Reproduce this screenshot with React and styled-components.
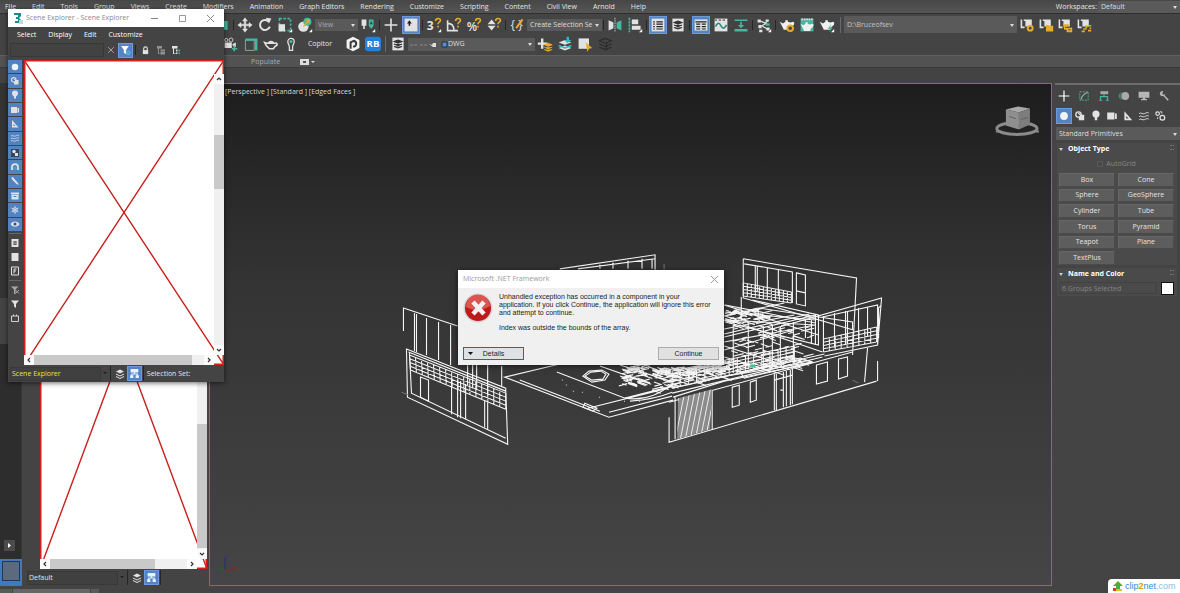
import { useState } from "react"
import styled, { createGlobalStyle, css } from "styled-components"

const GlobalStyle = createGlobalStyle`
  * { box-sizing: border-box; }
  body {
    margin: 0;
    background: #444;
    color: #e4e4e4;
    font: 7px/10px "Open Sans", "Noto Sans", sans-serif;
    overflow: hidden;
  }
  button, input, select {
    font: inherit;
    color: inherit;
    margin: 0;
    padding: 0;
    border: 0;
    border-radius: 0;
    background: none;
  }
  ul { list-style: none; margin: 0; padding: 0; }
  h1, h2, p { margin: 0; font: inherit; }
  a { color: inherit; text-decoration: none; }
`

/* ---------- icons, all on a 20 x 20 grid ---------- */

const W = "#e2e2e2"
const T = "#45b8a0"
const Y = "#e8ab2e"

const teapot = (
  <path d="M1 6l4 2 3-2V4h3v2l3 1 4-1c2 1 1 5-2 6l-2 4H6l-2-4z" fill="#f0f0f0" />
)
const question = (color = Y) => (
  <path d="M12 5c0-4 6-4 6-1 0 3-3 2-3 5m0 2v2" fill="none" stroke={color} strokeWidth="2" />
)
const corner = <path d="M19 15v4h-4z" fill="#fff" />
const renderFrame = <path d="M2 3h2v9h3v2H2zM6 3h10v9H8V5H6z" fill={W} />

const icons = {
  select: <path d="M3 5h14v11H3z" fill={T} />,
  move: <path d="M10 1l3 4h-2v4h4V7l4 3-4 3v-2h-4v4h2l-3 4-3-4h2v-4H5v2l-4-3 4-3v2h4V5H7z" fill={W} stroke={W} strokeWidth="0.600" />,
  rotate: (
    <>
      <path d="M15 6a6.300 6.300 0 1 0 1 6" fill="none" stroke={W} strokeWidth="2.500" />
      <path d="M11 1l7 1-3 6z" fill={W} />
    </>
  ),
  scale: (
    <>
      <path d="M3 2h14v15H3z" fill="none" stroke={T} strokeWidth="2" strokeDasharray="3 2" />
      <path d="M2 9h8v9H2z" fill={W} />
      {corner}
    </>
  ),
  place: (
    <>
      <circle cx="8" cy="12" r="6.500" fill={W} />
      <circle cx="13" cy="6" r="5" fill={T} />
      <path d="M8 12l7-8m-4 0h4v4" stroke={Y} strokeWidth="1.500" fill="none" />
      {corner}
    </>
  ),
  pivot: (
    <>
      <path d="M2 3h6v8H6v4H4v-4H2z" fill={W} />
      <path d="M11 3h6v8l-3 4-3-4z" fill={T} />
      <path d="M14 5l2 4h-4z" fill="#444" />
      {corner}
    </>
  ),
  axis: <path d="M9 2h2v7h7v2h-7v7H9v-7H2V9h7z" fill={W} />,
  keyboard: (
    <>
      <path d="M2 2h16v16H2z" fill={W} />
      <path d="M7 11V8H5l3-4 3 4H9v3z" fill="#222" />
    </>
  ),
  snap: (
    <>
      <text x="1" y="16" fontSize="15" fontWeight="700" fill={W}>3</text>
      {question()}
      {corner}
    </>
  ),
  angle: (
    <>
      <path d="M2 4v13h13M2 8c6 0 8 4 8 9" fill="none" stroke={W} strokeWidth="2" />
      {question()}
    </>
  ),
  percent: (
    <>
      <text x="1" y="17" fontSize="15" fontWeight="600" fill={W}>%</text>
      {question()}
    </>
  ),
  spinner: (
    <>
      <path d="M7 3l5 6H2zM7 17l5-6H2z" fill={W} />
      {question()}
    </>
  ),
  braces: (
    <>
      <text x="2" y="15" fontSize="15" fill={W}>{"{ }"}</text>
      <path d="M9 14l8-11" stroke={Y} strokeWidth="2.500" />
    </>
  ),
  mirror: (
    <>
      <path d="M2 4l6 3v7l-6 3z" fill={W} />
      <path d="M10 1v18" stroke={W} strokeDasharray="2 1" />
      <path d="M18 4l-6 3v7l6 3z" fill={T} />
    </>
  ),
  align: (
    <>
      <path d="M3 1v18" stroke={T} strokeWidth="2" strokeDasharray="3 1" />
      <path d="M6 3h8v6H6zM6 11h11v5H6z" fill={W} />
      {corner}
    </>
  ),
  list: (
    <>
      <path d="M2 2h16v16H2z" fill={W} />
      <path d="M4 6h2m2 0h8M4 9h2m2 0h8M4 12h2m2 0h8M4 15h2m2 0h8" stroke="#222" strokeWidth="1.500" />
    </>
  ),
  layerBox: (
    <>
      <path d="M3 2h14v16H3z" fill={W} />
      <path d="M10 5l5 2-5 2-5-2zM5 10l5 2 5-2M5 13l5 2 5-2" fill="#333" stroke="#333" strokeWidth="1.300" />
    </>
  ),
  table: (
    <>
      <path d="M2 3h16v14H2z" fill={W} />
      <path d="M3 6h14M4 9h5m2 0h5M4 12h5m2 0h5M4 15h5m2 0h5" stroke="#222" strokeWidth="1.500" />
    </>
  ),
  curve: (
    <>
      <path d="M2 2h16v16H2z" fill={W} />
      <path d="M2 4h15" stroke="#555" strokeDasharray="3 2" strokeWidth="1.500" />
      <path d="M3 12c3-6 5-5 7-1s4 4 7-1" fill="none" stroke="#278c7a" strokeWidth="2" />
    </>
  ),
  ribbon: (
    <>
      <path d="M2 3h16v2H2zM2 15h16v3H2z" fill={T} />
      <path d="M9 6h2v4h3l-4 4-4-4h3z" fill={T} />
    </>
  ),
  schematic: (
    <>
      <path d="M5 5l8 3-6 3 7 4m0-10l-3 4" fill="none" stroke={W} strokeWidth="1.500" />
      <path d="M2 3h4v4H2zM12 3h4v3h-4zM3 10h4v4H3zM4 16h4v3H4zM13 13h4v4h-4z" fill={W} />
      <path d="M12 8h5v3h-5z" fill={T} />
      {corner}
    </>
  ),
  renderSetup: (
    <>
      {teapot}
      <circle cx="14" cy="14" r="3.500" fill="#444" stroke={Y} strokeWidth="2.500" />
    </>
  ),
  renderWindow: (
    <>
      <path d="M2 2h16v16H2z" fill={T} />
      <path d="M3 3h14" stroke={W} strokeDasharray="2 1" strokeWidth="2" />
      <g transform="translate(1 3) scale(.9)">{teapot}</g>
    </>
  ),
  render: (
    <>
      {teapot}
      <path d="M15 9l-4 6h3l-1 4 4-6h-3z" fill={T} />
      {corner}
    </>
  ),
  outGear: (
    <>
      {renderFrame}
      <circle cx="14" cy="14" r="3" fill="none" stroke={Y} strokeWidth="2.500" />
    </>
  ),
  outFolder: (
    <>
      {renderFrame}
      <path d="M10 10h3l1 1h5v7h-9z" fill={Y} />
    </>
  ),
  outImport: (
    <>
      {renderFrame}
      <path d="M8 9h7v2h-2v2h6v6h-7v-3H9z" fill={Y} />
      <path d="M10 13h7M14 16h3" stroke="#444" />
    </>
  ),
  outLink: (
    <>
      {renderFrame}
      <path d="M7 18h3v-3h3v-4h5v4m-3 2h4" stroke={Y} strokeWidth="2" fill="none" strokeDasharray="4 1" />
    </>
  ),
  camera: (
    <>
      <path d="M2 8h9v7H2zM12 10l4-2v6l-4-2z" fill={W} />
      <circle cx="4" cy="5" r="2" fill="none" stroke={W} />
      <circle cx="10" cy="5" r="2.500" fill="none" stroke={W} />
      <path d="M14 12v7m-3-3h7" stroke={T} strokeWidth="2" />
    </>
  ),
  panel: (
    <>
      <path d="M3 5h11v13H3z" fill="none" stroke="#9bbab3" />
      <path d="M3 3h15v3H3zM15 3h3v15h-3z" fill={T} />
    </>
  ),
  teapot: (
    <>
      <path d="M2 8l3 1h10c3-1 4 3 0 4l-2 3H8l-4-4z" fill="none" stroke={W} strokeWidth="2" />
      <path d="M6 9c1-4 7-4 8 0z" fill={W} />
    </>
  ),
  light: (
    <>
      <path d="M8 14c0-3-2-4-2-7a4 4 0 0 1 8 0c0 3-2 4-2 7v4H8z" fill="none" stroke={W} strokeWidth="1.600" />
      <circle cx="10" cy="7" r="2" fill={T} />
    </>
  ),
  hex: (
    <>
      <path d="M10 1l8 4v10l-8 4-8-4V5z" fill="#f3f3f3" />
      <path d="M7 16V8l4-2c5 2 3 8-1 7" stroke="#3b3b3b" strokeWidth="2.500" fill="none" />
    </>
  ),
  rb: (
    <>
      <rect x="0" y="1" width="20" height="18" rx="4" fill="#2182dd" />
      <text x="10" y="14" fontSize="12" fontWeight="700" textAnchor="middle" fill="#fff">RB</text>
    </>
  ),
  layerAdd: (
    <>
      <path d="M5 3h3v5h5v3H8v5H5v-5H1V8h4z" fill={W} />
      <path d="M9 11l5-2 5 2-5 2zM9 14l5 2 5-2M9 17l5 2 5-2" fill={Y} stroke={Y} />
    </>
  ),
  layerSelect: (
    <>
      <path d="M2 8l8-3 8 3-8 3zM2 15l8 3 8-3-8-3z" fill={W} />
      <path d="M2 12l8 3 8-3" stroke="#35b6c4" strokeWidth="2" fill="none" />
      <path d="M12 1h3v4h3l-5 4-4-4h3z" fill="#35b6c4" />
    </>
  ),
  objSelect: (
    <>
      <path d="M2 3h13v13H2z" fill={W} />
      <path d="M11 8l8 7-4 1-2 4z" fill={Y} />
    </>
  ),
  layerOff: (
    <path d="M3 6l7-3 8 3-8 3zM3 10l7 3 8-3M3 14l7 3 8-3M12 9v9" fill="none" stroke="#2b2b2b" strokeWidth="1.300" />
  ),
  sphere: <circle cx="10" cy="10" r="6.500" fill="#eef4f6" />,
  shapes: (
    <>
      <circle cx="7.500" cy="7.500" r="4.500" fill="none" stroke={W} strokeWidth="2.200" />
      <path d="M10 8h7v9H8v-6h2z" fill={W} />
      <path d="M7 5l7 7" stroke={W} strokeWidth="2" />
    </>
  ),
  bulb: <path d="M8 17v-4C5 11 4 9 4 7a6 6 0 0 1 12 0c0 2-1 4-4 6v4z" fill={W} />,
  video: <path d="M2 4h12v12H2zM15 6h3v9h-3z" fill={W} />,
  ruler: <path d="M4 2l13 15H4zm3 8v4h4z" fill={W} fillRule="evenodd" />,
  waves: (
    <path d="M2 6c4-3 5 2 9 0s4-2 7-1M2 11c4-3 5 2 9 0s4-2 7-1M2 16c4-3 5 2 9 0s4-2 7-1" fill="none" stroke={W} strokeWidth="1.500" />
  ),
  gears: (
    <>
      <circle cx="6" cy="6" r="3" fill="none" stroke={W} strokeWidth="2" />
      <circle cx="14" cy="13" r="4" fill="none" stroke={W} strokeWidth="2" />
      <path d="M10 3h3v3M6 12v3" stroke={W} strokeWidth="1.500" fill="none" />
    </>
  ),
  group: (
    <>
      <path d="M2 2h16v16H2z" fill="#34465a" />
      <circle cx="8" cy="7" r="3.500" fill={W} />
      <path d="M10 10h6v6h-6z" fill={W} />
    </>
  ),
  magnet: (
    <>
      <path d="M4 16v-6a6 6 0 0 1 12 0v6" fill="none" stroke={W} strokeWidth="3.500" />
      <path d="M8 16v-4a2 2 0 0 1 4 0v4" fill="none" stroke={T} strokeWidth="2" />
    </>
  ),
  bone: <path d="M3 3l3-1 2 3 8 9 1 4-4-2-8-8-2-3z" fill={W} />,
  container: <path d="M2 3h16v4H2zM3 8h14v9H3zm4 2v2h6v-2z" fill={W} fillRule="evenodd" />,
  snow: (
    <>
      <path d="M10 2v16M3 6l14 8M3 14l14-8" stroke={W} strokeWidth="1.500" />
      <circle cx="10" cy="10" r="4.500" fill="none" stroke={W} strokeWidth="1.500" />
    </>
  ),
  eye: (
    <>
      <path d="M1 10c4-7 14-7 18 0-4 7-14 7-18 0z" fill={W} />
      <circle cx="10" cy="10" r="3" fill="#31527d" />
    </>
  ),
  page: (
    <>
      <path d="M3 2h14v16H3z" fill={W} />
      <path d="M7 6h6v8H7z" fill="#555" />
      <path d="M8 8h4M8 11h4" stroke={W} />
    </>
  ),
  blank: <path d="M3 2h14v16H3z" fill={W} />,
  pageF: (
    <>
      <path d="M3 2h14v16H3z" fill="none" stroke={W} strokeWidth="2" />
      <path d="M8 15V6h5M8 10h4" fill="none" stroke={W} strokeWidth="2" />
    </>
  ),
  filterOff: (
    <>
      <path d="M2 3h15l-6 6v9H8V9z" fill="#a8a8a8" />
      <path d="M11 10l7 7m0-7l-7 7" stroke="#a8a8a8" strokeWidth="2" />
    </>
  ),
  filter: <path d="M2 3h16l-6 7v8l-4-3v-5z" fill={W} />,
  filterOn: (
    <>
      <path d="M2 2h14l-5 7v8l-4-3V9z" fill="#fff" />
      <circle cx="15" cy="14" r="3" fill="none" stroke="#56c9d0" strokeWidth="2" />
    </>
  ),
  box: <path d="M3 6h14v11H3zM7 6V3m6 3V3" fill="none" stroke={W} strokeWidth="1.800" />,
  lock: (
    <>
      <path d="M4 9h12v9H4z" fill={W} />
      <path d="M6 9V6a4 4 0 0 1 8 0v3" fill="none" stroke={W} strokeWidth="2.500" />
    </>
  ),
  treeOff: <path d="M2 2h10v5H2zM9 9h9v4H9zM9 14h9v5H9zM4 7h2v10h3v1H4z" fill="#929292" />,
  tree: (
    <>
      <path d="M2 2h11v5H2zM4 7h2v10h4v1H4z" fill={W} />
      <path d="M10 9h3v4h-3zM10 15h3v3h-3z" fill={W} />
      <path d="M15 9h3v4h-3zM15 15h3v3h-3z" fill={T} />
    </>
  ),
  stack: <path d="M10 1l8 4-8 4-8-4zM2 9l8 4 8-4v2l-8 4-8-4zM2 14l8 4 8-4v2l-8 4-8-4z" fill={W} />,
  hierarchy: (
    <path d="M3 2h14v6H3zM2 13h6v5H2zM12 13h6v5h-6zM9 8h2v2h5v3h-2v-1H6v1H4v-3h5z" fill="#e9f1ff" />
  ),
  cross: <path d="M3 3l14 14M17 3L3 17" stroke="#bbb" strokeWidth="2" />,
  plus: <path d="M9 1h2v8h8v2h-8v8H9v-8H1V9h8z" fill="#fff" />,
  modify: (
    <>
      <path d="M3 3h14v14H3z" fill="none" stroke={T} strokeDasharray="3 2" strokeWidth="1.600" />
      <path d="M5 16c1-6 4-9 11-12" fill="none" stroke="#79b6a6" strokeWidth="2" />
    </>
  ),
  tabTree: (
    <>
      <path d="M4 2h13v5H4z" fill="#a8a8a8" />
      <path d="M10 7v4M4 18v-7h12v7M2 17h5m6 0h5" fill="none" stroke={T} strokeWidth="1.800" />
    </>
  ),
  motion: (
    <>
      <circle cx="12" cy="10" r="6.500" fill="#aaa" />
      <path d="M6 4a8 8 0 0 0 0 12M3 6a8 8 0 0 0 0 8" fill="none" stroke={T} />
    </>
  ),
  display: <path d="M1 3h18v10H1zM8 13h4v2h3v2H5v-2h3z" fill="#b5b5b5" />,
  wrench: <path d="M3 5a5 5 0 0 1 6-3L7 5l2 3 3-1c0 2-1 2-1 2l7 7-2 2-7-8c-4 1-6-1-6-5z" fill="#b5b5b5" />,
}

const Svg = styled.svg`
  display: block;
  flex: none;
  width: ${(p) => p.$size}px;
  height: ${(p) => p.$size}px;
  overflow: visible;
`

const Icon = ({ name, size = 16 }) => (
  <Svg $size={size} viewBox="0 0 20 20" aria-hidden="true">
    {icons[name]}
  </Svg>
)

/* ---------- shared controls ---------- */

const Tool = styled.button`
  display: flex;
  flex: none;
  align-items: center;
  justify-content: center;
  width: ${(p) => p.$w || 18}px;
  height: ${(p) => p.$h || 18}px;
  margin: 0 ${(p) => p.$gap || 0}px;
  ${(p) =>
    p.$on &&
    css`
      background: #5583c4;
      box-shadow: inset 0 0 0 1px #6b9bdc;
    `}
`

const Divider = styled.span`
  flex: none;
  width: 1px;
  height: ${(p) => p.$h || 10}px;
  margin: 0 ${(p) => p.$gap || 1}px;
  background: ${(p) => p.$bg || "#262626"};
`

const SelectWrap = styled.label`
  position: relative;
  display: flex;
  flex: none;
  width: ${(p) => p.$w};
  height: ${(p) => p.$h || 12}px;
  margin-top: ${(p) => p.$top || 0}px;
  background: #5a5a5a;
  color: ${(p) => p.$color || "#dedede"};
  select {
    appearance: none;
    width: 100%;
    padding: 0 8px 0 ${(p) => p.$pad || 3}px;
    outline: 0;
  }
  &::after {
    content: "";
    position: absolute;
    right: 3px;
    top: calc(50% - 1px);
    border: 2px solid transparent;
    border-top: 3px solid #ddd;
    border-bottom: 0;
  }
`

const Dropdown = ({ label, value, children, ...rest }) => (
  <SelectWrap {...rest}>
    {children}
    <select aria-label={label} defaultValue={value}>
      <option>{value}</option>
    </select>
  </SelectWrap>
)

/* ---------- top bars ---------- */

const Screen = styled.div`
  position: relative;
  display: flex;
  flex-direction: column;
  height: 100vh;
  overflow: hidden;
`

const MenuBar = styled.nav`
  display: flex;
  flex: none;
  align-items: center;
  height: 14px;
  padding-left: 5px;
  background: linear-gradient(#474747, #555);
  border-bottom: 1px solid #2e2e2e;
  ul {
    display: flex;
    flex: 1;
    gap: 16px;
  }
`

const Workspaces = styled.div`
  display: flex;
  align-items: center;
  gap: 1px;
  white-space: nowrap;
`

const ToolRow = styled.div`
  display: flex;
  flex: none;
  align-items: center;
  height: ${(p) => p.$h}px;
  padding: 0 0 ${(p) => p.$bottom || 0}px ${(p) => p.$left}px;
  background: #444;
`

const TextTool = styled.button`
  width: 38px;
  margin-right: 4px;
  text-align: center;
`

const LayerMarks = styled.svg`
  position: absolute;
  left: 2px;
  top: 3px;
  width: 38px;
  height: 7px;
`

const Ribbon = styled.div`
  display: flex;
  flex: none;
  align-items: center;
  gap: 20px;
  height: 13px;
  padding-left: 251px;
  background: #525252;
  border-top: 1px solid #5f5f5f;
  border-bottom: 1px solid #3a3a3a;
  color: #aaa;
`

const RibbonSpace = styled.div`
  flex: none;
  height: 15px;
  background: #434343;
`

const menus = [
  "File", "Edit", "Tools", "Group", "Views", "Create", "Modifiers", "Animation",
  "Graph Editors", "Rendering", "Customize", "Scripting", "Content", "Civil View", "Arnold", "Help",
]

const Tools = ({ names, on = [], w, gap = 1 }) =>
  names.map((n) => (
    <Tool key={n} $on={on.includes(n)} $w={w} $gap={gap} aria-label={n}>
      <Icon name={n} size={16} />
    </Tool>
  ))

const TopBars = () => (
  <header>
    <MenuBar>
      <ul>
        {menus.map((m) => (
          <li key={m}><a href="#menu">{m}</a></li>
        ))}
      </ul>
      <Workspaces>
        <span>Workspaces:</span>
        <Dropdown label="Workspaces" value="Default" $w="82px" />
      </Workspaces>
    </MenuBar>
    <ToolRow $h={21} $left={212}>
      <Tools names={["select"]} />
      <Divider />
      <Tools names={["move", "rotate", "scale", "place"]} />
      <Dropdown label="Reference coordinates" value="View" $w="43px" $color="#aaa" />
      <Tools names={["pivot"]} />
      <Divider />
      <Tools names={["axis", "keyboard"]} on={["keyboard"]} />
      <Divider />
      <Tools names={["snap", "angle", "percent", "spinner"]} />
      <Divider />
      <Tools names={["braces"]} />
      <Dropdown label="Selection set" value="Create Selection Se" $w="75px" />
      <Divider />
      <Tools names={["mirror", "align"]} />
      <Divider />
      <Tools names={["list", "layerBox"]} on={["list"]} />
      <Divider />
      <Tools names={["table", "curve", "ribbon"]} on={["table"]} />
      <Divider />
      <Tools names={["schematic"]} />
      <Divider />
      <Tools names={["renderSetup", "renderWindow", "render"]} />
      <Divider $h={16} $gap={3} $bg="#6a6a6a" />
      <Dropdown label="Project folder" value="D:\Bruceofsev" $w="173px" $h={17} $color="#c4c4c4" />
      <Tools names={["outGear", "outFolder", "outImport", "outLink"]} w={19} gap={0} />
    </ToolRow>
    <ToolRow $h={20} $bottom={2} $left={221}>
      <Tools names={["camera", "panel", "teapot", "light"]} />
      <TextTool>Copitor</TextTool>
      <Tools names={["hex", "rb"]} />
      <Divider $h={16} $gap={2} $bg="#6a6a6a" />
      <Tools names={["layerBox"]} />
      <Dropdown label="Layer" value="DWG" $w="127px" $h={13} $pad={40}>
        <LayerMarks viewBox="0 0 38 7">
          <path d="M0 4h8m2 0h8" stroke="#888" strokeDasharray="3 1" />
          <path d="M19 3l3 1 1-2h3v4h-3z" fill="#ddd" />
          <path d="M32 1h5v5h-5z" fill="#4a90e2" stroke="#2c2c2c" />
        </LayerMarks>
      </Dropdown>
      <Tools names={["layerAdd", "layerSelect", "objSelect", "layerOff"]} />
    </ToolRow>
    <Ribbon>
      <span>Populate</span>
      <svg width="16" height="6" viewBox="0 0 16 6">
        <path d="M0 0h9v6H0zM3 2v2h3V2z" fill="#ddd" fillRule="evenodd" />
        <path d="M11 2h4l-2 2z" fill="#ddd" />
      </svg>
    </Ribbon>
    <RibbonSpace />
  </header>
)

/* ---------- scene lists ---------- */

const ListBox = styled.div`
  position: relative;
  flex: 1;
  display: grid;
  grid-template: 14px 1fr 10px / 1fr 10px;
  min-width: 0;
  background: #fff;
  overflow: hidden;
`

const RedCross = styled.svg`
  position: absolute;
  inset: 0;
  width: 100%;
  height: 100%;
  path { stroke: #c8201c; stroke-width: 1.4; fill: none; vector-effect: non-scaling-stroke; }
  .frame { stroke: #d81f1f; stroke-width: 3; }
`

const ScrollBar = styled.div`
  position: relative;
  display: flex;
  flex-direction: ${(p) => (p.$across ? "row" : "column")};
  grid-area: ${(p) => (p.$across ? "3 / 1" : "2 / 2")};
  align-items: stretch;
  background: #f0f0f0;
  svg { flex: none; width: 10px; height: 10px; }
`

const Gap = styled.span`
  flex: ${(p) => p.$grow} 0 0;
`

const Thumb = styled.span`
  flex: ${(p) => p.$grow} 0 0;
  background: #c9c9c9;
`

const Chevron = ({ d }) => (
  <svg viewBox="0 0 10 10">
    <path d="M0 0h10v10H0z" fill="#fbfbfb" />
    <path d={d} fill="none" stroke="#333" strokeWidth="1.200" />
  </svg>
)

const SceneList = ({ down, across }) => (
  <ListBox>
    <RedCross viewBox="0 0 100 100" preserveAspectRatio="none">
      <path d="M0 0L100 100M100 0L0 100" />
      <path className="frame" d="M0 0H100V100H0z" />
    </RedCross>
    <ScrollBar>
      <Chevron d="M3 6l2-2 2 2" />
      <Gap $grow={down[0]} />
      <Thumb $grow={down[1]} />
      <Gap $grow={down[2]} />
      <Chevron d="M3 4l2 2 2-2" />
    </ScrollBar>
    <ScrollBar $across>
      <Chevron d="M6 3L4 5l2 2" />
      <Thumb $grow={across[0]} />
      <Gap $grow={across[1]} />
      <Chevron d="M4 3l2 2-2 2" />
    </ScrollBar>
  </ListBox>
)

const ListFooter = styled.footer`
  display: flex;
  flex: none;
  align-items: center;
  height: 17px;
  padding-left: ${(p) => p.$left}px;
  white-space: nowrap;
`

const NameField = styled.input`
  width: 91px;
  height: 14px;
  padding: 0 1px;
  border: 1px solid #393939;
  background: #404040;
  color: ${(p) => p.$color};
`

const Caret = styled.button`
  width: 8px;
  height: 13px;
  border: 3px solid transparent;
  border-width: 5px 2px;
  &::after {
    content: "";
    display: block;
    border: 2px solid transparent;
    border-top-color: #1c1c1c;
  }
`

const Footer = ({ name, color, left, children }) => (
  <ListFooter $left={left}>
    <NameField aria-label="Explorer name" defaultValue={name} $color={color} />
    <Caret aria-label="Choose explorer" />
    <Divider $h={15} />
    <Tool $w={15} $h={15} aria-label="Sort by layer"><Icon name="stack" size={10} /></Tool>
    <Tool $w={15} $h={15} $on aria-label="Sort by hierarchy"><Icon name="hierarchy" size={11} /></Tool>
    <Divider $h={15} />
    {children}
  </ListFooter>
)

/* ---------- floating scene explorer ---------- */

const ExplorerWindow = styled.section`
  position: absolute;
  left: 8px;
  top: 9px;
  z-index: 2;
  display: flex;
  flex-direction: column;
  width: 216px;
  height: 373px;
  background: #444;
  box-shadow: 0 1px 5px rgba(0, 0, 0, 0.6);
`

const TitleBar = styled.header`
  display: flex;
  flex: none;
  align-items: center;
  gap: 3px;
  height: 18px;
  padding: 0 1px 0 5px;
  background: #fff;
  color: #8a8a8a;
  h1 { flex: 1; }
`

const WindowButton = styled.button`
  width: ${(p) => p.$w || 25}px;
  height: 16px;
  svg { display: block; margin: auto; }
`

const ExplorerMenu = styled.ul`
  display: flex;
  flex: none;
  align-items: center;
  gap: 12px;
  height: 15px;
  padding-left: 9px;
  color: #fff;
`

const SearchRow = styled.div`
  display: flex;
  flex: none;
  align-items: center;
  height: 18px;
  padding: 0 0 2px 2px;
`

const Search = styled.input`
  width: 94px;
  height: 14px;
  border: 1px solid #383838;
  background: #424242;
`

const ExplorerBody = styled.div`
  display: flex;
  flex: 1;
  min-height: 0;
`

const FilterRail = styled.div`
  display: flex;
  flex: none;
  flex-direction: column;
  align-items: center;
  width: 16px;
  padding-right: 2px;
`

const FilterGroup = styled.div`
  display: flex;
  flex-direction: column;
  gap: 1px;
  height: 171px;
  button {
    flex: 1;
    background: #5382c1;
  }
`

const RailLine = styled.hr`
  width: 12px;
  margin: 2px 0;
  border: 0;
  border-top: 1px solid #666;
`

const filters = ["sphere", "shapes", "bulb", "video", "ruler", "waves", "group", "magnet", "bone", "container", "snow", "eye"]

const SceneExplorer = () => (
  <ExplorerWindow>
    <TitleBar>
      <svg width="10" height="12" viewBox="0 0 10 12">
        <path d="M1 1h7v3L6 6l2 2v3H2V9h3V7H3V5h2V3H1z" fill="#1b8a93" />
        <path d="M6 8h4v4H6z" fill="#c9d6d8" />
      </svg>
      <h1>Scene Explorer - Scene Explorer</h1>
      <WindowButton aria-label="Minimize">
        <svg width="7" height="7"><path d="M0 3.500h7" stroke="#888" /></svg>
      </WindowButton>
      <WindowButton aria-label="Maximize">
        <svg width="7" height="7"><path d="M.5.500h6v6h-6z" fill="none" stroke="#999" /></svg>
      </WindowButton>
      <WindowButton aria-label="Close">
        <svg width="7" height="7"><path d="M0 0l7 7M7 0L0 7" stroke="#888" /></svg>
      </WindowButton>
    </TitleBar>
    <ExplorerMenu>
      {["Select", "Display", "Edit", "Customize"].map((m) => (
        <li key={m}><a href="#explorer">{m}</a></li>
      ))}
    </ExplorerMenu>
    <SearchRow>
      <Search aria-label="Find" />
      <Tool $w={14} $h={15} aria-label="Clear"><Icon name="cross" size={8} /></Tool>
      <Tool $w={15} $h={15} $on aria-label="Filter"><Icon name="filterOn" size={11} /></Tool>
      <Divider $gap={2} />
      <Tool $w={15} $h={15} aria-label="Lock"><Icon name="lock" size={9} /></Tool>
      <Tool $w={15} $h={15} aria-label="Collapse"><Icon name="treeOff" size={10} /></Tool>
      <Tool $w={15} $h={15} aria-label="Expand"><Icon name="tree" size={10} /></Tool>
    </SearchRow>
    <ExplorerBody>
      <FilterRail>
        <FilterGroup>
          {filters.map((f) => (
            <Tool key={f} $w={14} $h={13} aria-label={f}><Icon name={f} size={10} /></Tool>
          ))}
        </FilterGroup>
        <RailLine />
        {["page", "blank", "pageF"].map((f) => (
          <Tool key={f} $w={14} $h={14} aria-label={f}><Icon name={f} size={10} /></Tool>
        ))}
        <RailLine />
        {["filterOff", "filter", "box"].map((f) => (
          <Tool key={f} $w={14} $h={14} aria-label={f}><Icon name={f} size={10} /></Tool>
        ))}
      </FilterRail>
      <SceneList down={[51, 54, 156]} across={[158, 12]} />
    </ExplorerBody>
    <Footer name="Scene Explorer" color="#e6e62a" left={2}>
      <span>&nbsp;Selection Set:</span>
    </Footer>
  </ExplorerWindow>
)

/* ---------- docked left side ---------- */

const Workspace = styled.main`
  display: flex;
  flex: 1;
  min-height: 0;
`

const LeftRail = styled.aside`
  display: flex;
  flex: none;
  flex-direction: column;
  justify-content: flex-end;
  align-items: flex-start;
  width: 22px;
  border-right: 1px solid #383838;
  background: linear-gradient(#343434 215px, #444 215px, #444 261px, #2d2d2d 261px);
`

const PlayButton = styled.button`
  display: grid;
  place-items: center;
  width: 11px;
  height: 11px;
  margin: 0 0 8px 4px;
  background: #4b4b4b;
`

const ViewportTab = styled.button`
  width: 22px;
  height: 27px;
  border: 2px solid #4278bd;
  border-bottom-width: 5px;
  background: #5c6a7e;
  box-shadow: inset 0 0 0 1px #27364b;
`

const Dock = styled.aside`
  display: flex;
  flex: none;
  flex-direction: column;
  width: 185px;
  padding-top: 38px;
`

const DockBody = styled.div`
  display: flex;
  flex: 1;
  min-height: 0;
  padding-left: 18px;
`

/* ---------- viewport ---------- */

const Viewport = styled.section`
  position: relative;
  flex: 1;
  margin-left: 2px;
  border: 1px solid #857b22;
  background: linear-gradient(#1d1d1d, #333 38%, #454545);
  overflow: hidden;
`

const ViewLabel = styled.p`
  padding: 3px 0 0 15px;
  color: #d8d8d8;
`

const Drawing = styled.svg`
  position: absolute;
  inset: 0;
  width: 100%;
  height: 100%;
`

const mix = (a, b, t) => a + (b - a) * t

// rails run from a to b on top and from c to d at the bottom
const railing = ([ax, ay], [bx, by], [cx, cy], [dx, dy], rows, posts) => {
  let d = ""
  for (let i = 0; i <= rows; i++) {
    const t = i / rows
    d += `M${mix(ax, cx, t)} ${mix(ay, cy, t)}L${mix(bx, dx, t)} ${mix(by, dy, t)}`
  }
  for (let i = 0; i <= posts; i++) {
    const t = i / posts
    d += `M${mix(ax, bx, t)} ${mix(ay, by, t)}L${mix(cx, dx, t)} ${mix(cy, dy, t)}`
  }
  return d
}

// short strokes along the two floor directions, for furniture and fittings
const clutter = (x, y, w, h, slope, count, seed) => {
  let s = seed
  const rnd = () => {
    s = (s * 16807) % 2147483647
    return s / 2147483647
  }
  rnd()
  let d = ""
  for (let i = 0; i < count; i++) {
    const u = rnd() * w
    const px = x + u
    const py = y + u * slope + rnd() * h
    const len = 3 + rnd() * 8
    d += `M${px} ${py}l${len} ${rnd() > 0.4 ? -len * 0.25 : len * 0.35}`
  }
  return d
}

const walls = [
  // left wall at the back
  "M404 331V308L458 326M415 313v38M417 314v38M427 318v37M439 322v38M451 325v40",
  "M468 365v20M473 365v23M477 365v24M488 365v30M502 366v20",
  // left wall in front
  "M407 349L506 388L508 444L408 397zM410 353l2 40 94 45M409 352l97 39",
  "M452 378v36M458 380v37M461 381v37M466 384v35M485 400v27M488 402v27M421 377l8 3v21l-8-4z",
  // top wall at the back
  "M560 269L655 255V270M578 269L655 259M600 269v-4M613 269v-6M628 269v-8M642 269v-10M652 269v-9",
  // upper right wall
  "M743 259L856 278L852 355M743 259V298L853 330M744 264L792 272V303M755 266v26M757 266v26M767 268v26M778 270v26",
  "M796 273l9 2v31l-9-2zM796 291l9 2",
  // right wall
  "M758 333L881 298L877 345L824 356M877 361V381M822 317L877 305V344M823 316v36M834 313v34M845 311v34M847 311v33M858 308v32M867 307v30M880 306l-2 2v30",
  "M867 348L864 382",
  // front wall
  "M669 417V442L876 381M673 397L724 381L812 363M669 402L852 352M675 397v42M712 390v39",
  "M732 387l7-2v20l-7 2zM750 382l6-2v20l-6 2zM816 365l11-3v19l-11 3zM838 359l9-2v19l-9 3z",
  "M774 374v36M776 374v36M783 372v35M786 371v35M790 370v35M792 369v35M774 380l18-5M780 390h3v6",
  // floor slab
  "M560 364L505 377L609 417L673 400M520 380L600 411M557 372L625 398L672 386M588 408L668 388M609 412L672 396",
  "M560 364L724 330M585 403l12 5-4 3-10-4z",
  "M583 376l6-5 13-1 7 4-4 6-13 2z",
  "M585 376l6-4 10-1 5 3-3 5-11 1z",
  "M625 398q25 4 47-14M630 401q25-2 42-9M600 366l40 14M620 365l50 16",
  // roof of the middle part
  "M724 337L815 315M724 342L815 325L724 320M725 305L815 323M725 312L815 320M752 300L818 315L818 345L725 322",
  "M758 308L852 322V330M724 305L818 335M741 297v24M724 350L793 330M743 325L822 352M758 318V308",
  "M733 325v48M748 322v47M763 326v42M772 326v40M780 327v36M793 322v38M805 320v18M811 320v24M815 315v30",
  "M724 357l60 18M724 346l60 19M700 380l112-18-22-5M724 334l85-20M724 329l70-14M724 316l60-13",
  "M672 388l152-34M672 393l150-36M740 372l60-14 12 4-68 16z",
]

const rails = [
  railing([410, 355], [506, 393], [411, 370], [506, 409], 4, 16),
  railing([743, 283], [791, 292], [743, 296], [791, 303], 4, 12),
  railing([823, 339], [876, 327], [823, 352], [876, 342], 4, 9),
  railing([672, 371], [794, 346], [672, 388], [794, 361], 5, 15),
]

const fittings = [
  clutter(618, 376, 24, 10, -0.1, 34, 9001),
  clutter(622, 366, 46, 8, 0, 44, 5023),
  clutter(650, 376, 74, 16, -0.2, 90, 7741),
  clutter(655, 367, 66, 9, 0, 60, 8123),
  clutter(724, 310, 38, 12, 0, 60, 3119),
  clutter(724, 362, 80, 12, -0.1, 70, 1307),
  clutter(724, 340, 70, 20, -0.1, 40, 2221),
  clutter(730, 322, 80, 16, 0, 22, 5403),
]

const hatch = Array.from({ length: 11 }, (_, i) => `M${669 + i * 5} 445L${681 + i * 5} 385`).join("")

const Building = () => (
  <Drawing viewBox="211 84 839 501" preserveAspectRatio="xMidYMid slice">
    <clipPath id="garage"><path d="M678 398L712 389L710 429L677 439z" /></clipPath>
    <g fill="none" stroke="#f6f6f6" strokeWidth="1.100">
      {walls.map((d, i) => <path key={i} d={d} />)}
      <path d={rails.join("")} strokeWidth="1" />
      <path d={fittings.join("")} />
    </g>
    <g clipPath="url(#garage)">
      <path d="M670 380h50v70h-50z" fill="#8c8c8c" />
      <path d={hatch} stroke="#ececec" />
    </g>
    <path d="M562 380h1m3 5h1m6 6h1m8 1h1m16 5h1m24 4h1m14 0h1" stroke="#ddd" />
    <path d="M750 366h5" stroke="#35c79a" strokeWidth="3" />
    <path d="M664 270v-6M402 392l7 3M852 380l6 3" stroke="#777" />
    {/* view cube */}
    <ellipse cx="1016" cy="129" rx="20" ry="6" fill="none" stroke="#8b8b8b" strokeWidth="3" />
    <path d="M995 132h5m33 0h5" stroke="#8b8b8b" strokeWidth="2" />
    <path d="M1005 110l12-3 12 2-11 4z" fill="#a9a9a9" />
    <path d="M1005 110l13 3v17l-13-4z" fill="#8f8f8f" />
    <path d="M1018 113l11-4v16l-11 5z" fill="#7d7d7d" />
    <path d="M1008 117l7 2m5 1l7-2" stroke="#666" />
    {/* world axis */}
    <path d="M226 570v-13" stroke="#1f2a8c" />
    <path d="M226 570l11-3" stroke="#962222" />
    <path d="M226 570l-7-2" stroke="#1d6b25" />
    <g fontSize="6">
      <text x="226" y="556" fill="#2733a8">z</text>
      <text x="237" y="569" fill="#a32222">x</text>
    </g>
  </Drawing>
)

/* ---------- command panel ---------- */

const CommandPanel = styled.aside`
  display: flex;
  flex: none;
  flex-direction: column;
  width: 125px;
  margin-left: 3px;
  padding: 0 0 0 1px;
  border-top: 2px solid #6c6c6c;
`

const TabRow = styled.div`
  display: flex;
  gap: ${(p) => p.$gap || 0}px;
  height: ${(p) => p.$h}px;
  align-items: center;
`

const Rollout = styled.section`
  margin: 3px 3px 0 1px;
  padding: 0 3px 0 2px;
  background: #4a4a4a;
  h2 {
    display: flex;
    align-items: center;
    gap: 5px;
    height: 12px;
    font-weight: 700;
    color: #fff;
  }
  h2::before {
    content: "";
    border: 2px solid transparent;
    border-top: 3px solid #ccc;
    border-bottom: 0;
  }
  h2::after {
    content: "";
    width: 4px;
    height: 3px;
    margin: 0 0 3px auto;
    border-top: 1px dotted #777;
    border-bottom: 1px dotted #777;
  }
`

const AutoGrid = styled.label`
  display: flex;
  align-items: center;
  justify-content: center;
  gap: 3px;
  height: 18px;
  color: #858585;
  input {
    appearance: none;
    width: 6px;
    height: 6px;
    border: 1px solid #585858;
  }
`

const ObjectGrid = styled.div`
  display: grid;
  grid-template-columns: 1fr 1fr;
  grid-auto-rows: 1fr;
  gap: 2px 3px;
  height: 92px;
`

const ObjectButton = styled.button`
  background: #5d5d5d;
  border: 1px solid #666;
  border-color: #666 #4b4b4b #4b4b4b #666;
  line-height: 10px;
`

const NameRow = styled.div`
  display: flex;
  align-items: center;
  gap: 4px;
  height: 16px;
  input {
    flex: 1;
    min-width: 0;
    height: 12px;
    padding: 0 2px;
    border: 1px solid #424242;
    color: #858585;
  }
`

const Swatch = styled.button`
  width: 13px;
  height: 13px;
  background: #fff;
  border: 1px solid #111;
`

const objects = ["Box", "Cone", "Sphere", "GeoSphere", "Cylinder", "Tube", "Torus", "Pyramid", "Teapot", "Plane", "TextPlus"]

const Commands = () => (
  <CommandPanel>
    <TabRow $h={22} $gap={4}>
      {["plus", "modify", "tabTree", "motion", "display", "wrench"].map((n) => (
        <Tool key={n} $w={16} aria-label={n}><Icon name={n} size={12} /></Tool>
      ))}
    </TabRow>
    <TabRow $h={18}>
      {["sphere", "shapes", "bulb", "video", "ruler", "waves", "gears"].map((n) => (
        <Tool key={n} $w={16} $h={16} $on={n === "sphere"} aria-label={n}><Icon name={n} size={12} /></Tool>
      ))}
    </TabRow>
    <Dropdown label="Category" value="Standard Primitives" $w="100%" $h={13} $top={2} />
    <Rollout>
      <h2>Object Type</h2>
      <AutoGrid><input type="checkbox" />AutoGrid</AutoGrid>
      <ObjectGrid>
        {objects.map((o) => <ObjectButton key={o}>{o}</ObjectButton>)}
      </ObjectGrid>
    </Rollout>
    <Rollout>
      <h2>Name and Color</h2>
      <NameRow>
        <input aria-label="Name" defaultValue="6 Groups Selected" />
        <Swatch aria-label="Color" />
      </NameRow>
    </Rollout>
  </CommandPanel>
)

/* ---------- error dialog ---------- */

const Dialog = styled.section`
  position: absolute;
  left: 458px;
  top: 270px;
  z-index: 3;
  width: 266px;
  background: #f0f0f0;
  color: #1b1b1b;
  font-family: "Liberation Sans", Arial, sans-serif;
  box-shadow: 0 1px 6px rgba(0, 0, 0, 0.6);
`

const DialogTitle = styled(TitleBar)`
  color: #999;
  font-family: "Open Sans", sans-serif;
`

const Message = styled.div`
  display: flex;
  gap: 6px;
  height: 59px;
  padding: 5px 4px 0 5px;
  line-height: 8px;
  p { margin-bottom: 7px; }
`

const DialogActions = styled.div`
  display: flex;
  justify-content: space-between;
  padding: 0 5px 5px;
`

const DialogButton = styled.button`
  display: flex;
  align-items: center;
  justify-content: center;
  width: 61px;
  height: 13px;
  background: #e1e1e1;
  box-shadow: inset 0 0 0 1px ${(p) => (p.$focus ? "#0f6fc5" : "#adadad")};
  svg { margin-right: 10px; }
  padding-right: ${(p) => (p.$focus ? 15 : 0)}px;
`

const ErrorDialog = ({ onClose }) => (
  <Dialog role="alertdialog" aria-label="Microsoft .NET Framework">
    <DialogTitle>
      <h1>Microsoft .NET Framework</h1>
      <WindowButton $w={17} aria-label="Close" onClick={onClose}>
        <svg width="7" height="7"><path d="M0 0l7 7M7 0L0 7" stroke="#999" /></svg>
      </WindowButton>
    </DialogTitle>
    <Message>
      <svg width="30" height="30" viewBox="0 0 30 30">
        <circle cx="15" cy="15" r="14.500" fill="#d7d3d3" />
        <circle cx="15" cy="15" r="13" fill="#bd1a1a" />
        <path d="M3 14a12 12 0 0 1 24-1c-8 5-16 5-24 1z" fill="#dc5651" />
        <path d="M10 9l11 12M21 9L10 21" stroke="#f4f1f4" strokeWidth="4.500" />
      </svg>
      <div>
        <p>
          Unhandled exception has occurred in a component in your<br />
          application. If you click Continue, the application will ignore this error<br />
          and attempt to continue.
        </p>
        <p>Index was outside the bounds of the array.</p>
      </div>
    </Message>
    <DialogActions>
      <DialogButton $focus>
        <svg width="5" height="3"><path d="M0 0h5L2.500 3z" fill="#111" /></svg>
        Details
      </DialogButton>
      <DialogButton onClick={onClose}>Continue</DialogButton>
    </DialogActions>
  </Dialog>
)

/* ---------- bottom ---------- */

const TimeStrip = styled.footer`
  display: flex;
  flex: none;
  gap: 1px;
  height: 7px;
  padding-top: 3px;
  background: #444;
  span { width: 12px; background: #5a5a5a; }
  span:nth-child(2) { width: 77px; background: #666; }
  span:nth-child(3) { width: 8px; }
`

const Badge = styled.a`
  position: absolute;
  right: 0;
  bottom: 0;
  display: flex;
  align-items: center;
  gap: 2px;
  width: 72px;
  height: 14px;
  padding-left: 5px;
  border-radius: 4px 0 0 0;
  background: #fff;
  color: #1f8fd4;
  font: 9px/12px "Liberation Sans", Arial, sans-serif;
  b { color: #d99a10; }
  i { font-style: normal; color: #7ec3ea; }
`

export default function App() {
  const [open, setOpen] = useState(true)

  return (
    <>
      <GlobalStyle />
      <Screen>
        <TopBars />
        <Workspace>
          <LeftRail>
            <PlayButton aria-label="Play">
              <svg width="5" height="5"><path d="M1 0l3 2.500L1 5z" fill="#fff" /></svg>
            </PlayButton>
            <ViewportTab aria-label="Viewport layout" />
          </LeftRail>
          <Dock>
            <DockBody>
              <SceneList down={[289, 128, 1]} across={[104, 32]} />
            </DockBody>
            <Footer name="Default" color="#e4e4e4" left={5} />
          </Dock>
          <Viewport>
            <ViewLabel>[Perspective ] [Standard ] [Edged Faces ]</ViewLabel>
            <Building />
          </Viewport>
          <Commands />
        </Workspace>
        <TimeStrip><span /><span /><span /></TimeStrip>
        <SceneExplorer />
        {open && <ErrorDialog onClose={() => setOpen(false)} />}
        <Badge href="#clip">
          <svg width="10" height="10" viewBox="0 0 10 10">
            <path d="M5 0l5 5H7v4H3V5H0z" fill="#55a832" />
            <path d="M0 7h3v3H0z" fill="#dc3b28" />
            <path d="M3 8h6v2H3z" fill="#e8ba25" />
          </svg>
          <span>clip<b>2</b>net<i>.com</i></span>
        </Badge>
      </Screen>
    </>
  )
}
